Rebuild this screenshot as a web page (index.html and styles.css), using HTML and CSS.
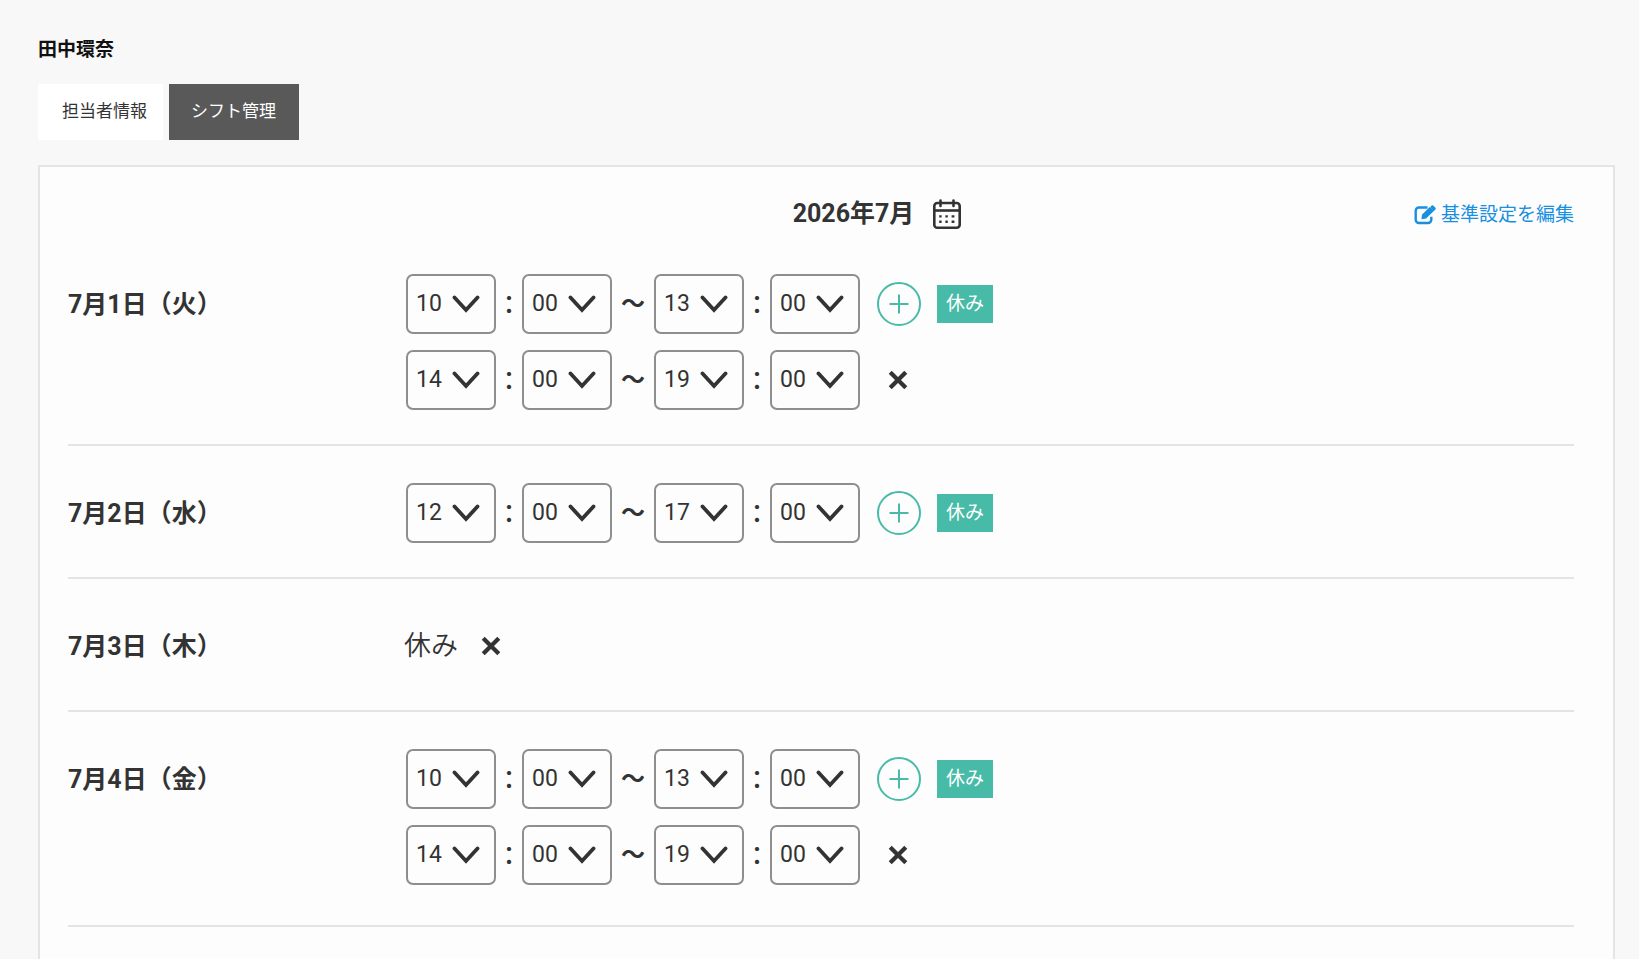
FILE: index.html
```html
<!DOCTYPE html>
<html lang="ja">
<head>
<meta charset="utf-8">
<meta name="viewport" content="width=device-width, initial-scale=1">
<title>シフト管理</title>
<link rel="stylesheet" href="styles.css">
</head>
<body>
<svg class="sprite" aria-hidden="true">
  <symbol id="i-plus" viewBox="0 0 20 20"><path d="M10 0.500v19M0.500 10h19" stroke="currentColor" stroke-width="2" fill="none"/></symbol>
  <symbol id="i-cross" viewBox="0 0 18 18"><path d="M2 2l14 14M16 2l-14 14" stroke="currentColor" stroke-width="3.800" fill="none"/></symbol>
</svg>
<main class="page">
  <h1 class="name">田中環奈</h1>
  <nav class="tabs">
    <a class="tab" href="#info">担当者情報</a>
    <a class="tab tab-active" href="#shift" aria-current="page">シフト管理</a>
  </nav>
  <section class="panel">
    <header class="panel-head">
      <div class="month">
        <h2 class="month-title">2026年7月</h2>
        <button class="icon-button" type="button" aria-label="月を選択">
          <svg class="calendar" viewBox="0 0 28 30" fill="none" stroke="currentColor">
            <rect x="1.300" y="4" width="25.400" height="24.700" rx="3" stroke-width="2.600"/>
            <path d="M1.300 11.500h25.400" stroke-width="2.600"/>
            <path d="M7.500 1.500v5.500M20.500 1.500v5.500" stroke-width="2.600" stroke-linecap="round"/>
            <path d="M6.200 17.400h2.400M12.400 17.400h2.400M18.600 17.400h2.800M6.200 22.800h2.400M12.400 22.800h2.400M18.600 22.800h2.800" stroke-width="2.400"/>
          </svg>
        </button>
      </div>
      <a class="edit-link" href="#base">
        <svg class="edit-icon" viewBox="0 0 22 20" fill="none" stroke="currentColor">
          <path d="M13.500 2.500H5A3.300 3.300 0 0 0 1.700 5.800v9A3.300 3.300 0 0 0 5 18h9a3.300 3.300 0 0 0 3.300-3.300v-3" stroke-width="2.400"/>
          <path d="M7.500 14.200l0.600-4.700L15.800 2l4 3.900-7.700 7.600z" fill="currentColor" stroke="none"/>
          <path d="M16.200 2.200l1.400-1.800q0.800-0.500 1.600 0.200l2.200 2.200q0.700 0.800 0 1.600l-1.900 1.900z" fill="currentColor" stroke="none"/>
        </svg>
        <span>基準設定を編集</span>
      </a>
    </header>

    <article class="day">
      <h3 class="date">7月1日（火）</h3>
      <div class="shifts">
        <div class="shift">
          <select class="time" aria-label="開始 時"><option>10</option></select><span class="colon">：</span><select class="time" aria-label="開始 分"><option>00</option></select><span class="tilde">～</span><select class="time" aria-label="終了 時"><option>13</option></select><span class="colon">：</span><select class="time" aria-label="終了 分"><option>00</option></select>
          <button class="add" type="button" aria-label="追加"><svg class="plus"><use href="#i-plus"/></svg></button>
          <button class="off" type="button">休み</button>
        </div>
        <div class="shift">
          <select class="time" aria-label="開始 時"><option>14</option></select><span class="colon">：</span><select class="time" aria-label="開始 分"><option>00</option></select><span class="tilde">～</span><select class="time" aria-label="終了 時"><option>19</option></select><span class="colon">：</span><select class="time" aria-label="終了 分"><option>00</option></select>
          <button class="remove" type="button" aria-label="削除"><svg class="cross"><use href="#i-cross"/></svg></button>
        </div>
      </div>
    </article>

    <article class="day">
      <h3 class="date">7月2日（水）</h3>
      <div class="shifts">
        <div class="shift">
          <select class="time" aria-label="開始 時"><option>12</option></select><span class="colon">：</span><select class="time" aria-label="開始 分"><option>00</option></select><span class="tilde">～</span><select class="time" aria-label="終了 時"><option>17</option></select><span class="colon">：</span><select class="time" aria-label="終了 分"><option>00</option></select>
          <button class="add" type="button" aria-label="追加"><svg class="plus"><use href="#i-plus"/></svg></button>
          <button class="off" type="button">休み</button>
        </div>
      </div>
    </article>

    <article class="day">
      <h3 class="date">7月3日（木）</h3>
      <div class="shifts">
        <div class="shift">
          <span class="holiday">休み</span>
          <button class="remove" type="button" aria-label="休みを解除"><svg class="cross"><use href="#i-cross"/></svg></button>
        </div>
      </div>
    </article>

    <article class="day">
      <h3 class="date">7月4日（金）</h3>
      <div class="shifts">
        <div class="shift">
          <select class="time" aria-label="開始 時"><option>10</option></select><span class="colon">：</span><select class="time" aria-label="開始 分"><option>00</option></select><span class="tilde">～</span><select class="time" aria-label="終了 時"><option>13</option></select><span class="colon">：</span><select class="time" aria-label="終了 分"><option>00</option></select>
          <button class="add" type="button" aria-label="追加"><svg class="plus"><use href="#i-plus"/></svg></button>
          <button class="off" type="button">休み</button>
        </div>
        <div class="shift">
          <select class="time" aria-label="開始 時"><option>14</option></select><span class="colon">：</span><select class="time" aria-label="開始 分"><option>00</option></select><span class="tilde">～</span><select class="time" aria-label="終了 時"><option>19</option></select><span class="colon">：</span><select class="time" aria-label="終了 分"><option>00</option></select>
          <button class="remove" type="button" aria-label="削除"><svg class="cross"><use href="#i-cross"/></svg></button>
        </div>
      </div>
    </article>
  </section>
</main>
</body>
</html>
```
FILE: styles.css
```css
* {
  box-sizing: border-box;
}

body {
  margin: 0;
  background: #f8f8f8;
  color: #333;
  font-family: Roboto, "Noto Sans CJK JP", sans-serif;
}

h1,
h2,
h3 {
  margin: 0;
}

button {
  padding: 0;
  border: 0;
  background: none;
  color: inherit;
  font: inherit;
  cursor: pointer;
}

svg {
  display: block;
}

.sprite {
  display: none;
}

.page {
  display: flex;
  flex-direction: column;
  min-height: 100vh;
  padding: 37px 24px 0 38px;
}

.name {
  color: #111;
  font-size: 19px;
  line-height: 26px;
}

.tabs {
  display: flex;
  gap: 6px;
  margin: 21px 0 25px;
}

.tab {
  padding: 15px 23px 17px 24px;
  background: #fff;
  color: #333;
  font-size: 17px;
  line-height: 24px;
  text-decoration: none;
}

.tab:first-child {
  padding-right: 16px;
}

.tab-active {
  background: #595959;
  color: #fff;
  padding-left: 22px;
}

.panel {
  flex: 1;
  padding: 26px 39px 0 28px;
  border: 2px solid #e4e4e4;
  border-bottom: 0;
  background: #fdfdfd;
}

.panel-head {
  display: grid;
  grid-template-columns: 1fr auto 1fr;
  align-items: center;
  min-height: 44px;
}

.month {
  display: flex;
  grid-column: 2;
  align-items: center;
  gap: 19px;
  padding: 0 0 2px 112px;
}

.month-title,
.date {
  font-size: 25px;
  line-height: 36px;
}

.calendar {
  width: 28px;
  height: 30px;
}

.edit-link {
  display: flex;
  align-items: center;
  justify-self: end;
  gap: 5px;
  color: #188fe0;
  font-size: 19px;
  line-height: 28px;
  text-decoration: none;
}

.edit-icon {
  width: 22px;
  height: 20px;
}

.day {
  display: grid;
  grid-template-columns: 338px 1fr;
  padding: 37px 0 34px;
  border-bottom: 2px solid #e4e4e4;
}

.day:last-child {
  padding-bottom: 40px;
}

.date {
  padding-top: 13px;
}

.shifts {
  display: grid;
  gap: 16px;
}

.shift {
  display: flex;
  align-items: center;
  min-height: 60px;
}

.time {
  width: 90px;
  height: 60px;
  padding: 0 0 2px 8px;
  border: 2px solid #8e8e8e;
  border-radius: 7px;
  appearance: none;
  background: transparent url("data:image/svg+xml,%3Csvg xmlns='http://www.w3.org/2000/svg' width='28' height='18'%3E%3Cpath d='M2.500 2.500L14 15L25.500 2.500' fill='none' stroke='%23333' stroke-width='3.800' stroke-linecap='round'/%3E%3C/svg%3E") no-repeat right 14px center;
  color: #333;
  font: 23px Roboto, sans-serif;
}

.colon,
.tilde {
  padding-bottom: 2px;
  font-family: "Noto Sans CJK JP", sans-serif;
  font-weight: 500;
  font-size: 25px;
  line-height: 36px;
  text-align: center;
}

.colon {
  width: 26px;
}

.tilde {
  width: 42px;
  padding-bottom: 4px;
  font-size: 24px;
  font-weight: 700;
}

.add {
  display: grid;
  place-items: center;
  width: 44px;
  height: 44px;
  margin-left: 17px;
  border: 2px solid #47bba7;
  border-radius: 50%;
  color: #47bba7;
}

.plus {
  width: 20px;
  height: 20px;
}

.off {
  margin-left: 16px;
  padding: 5px 9px;
  background: #47bba7;
  color: #fff;
  font-size: 19px;
  line-height: 28px;
}

.remove {
  margin-left: 28px;
}

.holiday {
  margin-left: -2px;
  font-size: 27px;
  font-weight: 350;
  line-height: 40px;
}

.holiday + .remove {
  margin-left: 23px;
}

.cross {
  width: 20px;
  height: 20px;
}
```
